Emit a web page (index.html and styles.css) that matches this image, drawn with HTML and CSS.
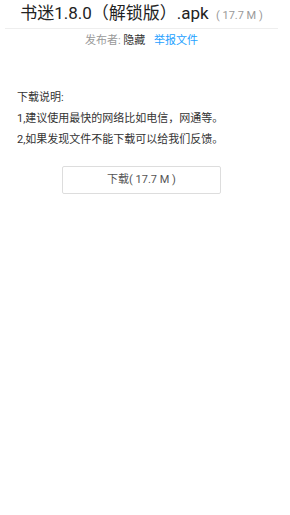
FILE: index.html
```html
<!DOCTYPE html>
<html lang="zh">
<head>
  <meta charset="UTF-8">
  <title>书迷1.8.0（解锁版）.apk</title>
  <link rel="stylesheet" href="styles.css">
</head>
<body>
  <div class="page">
    <h1 class="title">书迷1.8.0（解锁版）.apk <span class="size">( 17.7 M )</span></h1>
    <div class="meta">
      <span class="label">发布者:</span> <span class="owner">隐藏</span>
      <a class="report" href="#">举报文件</a>
    </div>
    <div class="notes">
      <p>下载说明:</p>
      <p>1,建议使用最快的网络比如电信，网通等。</p>
      <p>2,如果发现文件不能下载可以给我们反馈。</p>
    </div>
    <div class="actions">
      <a class="btn" href="#">下载( 17.7 M )</a>
    </div>
  </div>
</body>
</html>
```

FILE: styles.css
```css
body {
  margin: 0;
  font-family: Roboto, "Noto Sans CJK SC", sans-serif;
  color: #333;
  background: #fff;
}
.page {
  padding: 0 12px 0 5px;
}
.title {
  margin: 0;
  height: 24px;
  padding-top: 2px;
  padding-bottom: 2px;
  font-size: 17px;
  font-weight: normal;
  line-height: 22px;
  color: #222;
  text-align: center;
  border-bottom: 1px solid #eee;
  white-space: nowrap;
  overflow: hidden;
}
.size {
  font-size: 11px;
  color: #999;
  margin-left: 3px;
}
.meta {
  text-align: center;
  font-size: 11px;
  line-height: 14px;
  margin-top: 5px;
}
.label {
  color: #999;
}
.owner {
  color: #333;
}
.report {
  color: #1e9fff;
  text-decoration: none;
  margin-left: 6px;
}
.notes {
  margin-top: 39px;
  padding-left: 12px;
  font-size: 11px;
  color: #333;
}
.notes p {
  margin: 0;
  line-height: 21px;
}
.actions {
  display: flex;
  justify-content: center;
  margin-top: 16px;
}
.btn {
  display: block;
  width: 157px;
  height: 26px;
  line-height: 26px;
  border: 1px solid #ddd;
  border-radius: 2px;
  text-align: center;
  font-size: 11px;
  color: #555;
  text-decoration: none;
}
```
